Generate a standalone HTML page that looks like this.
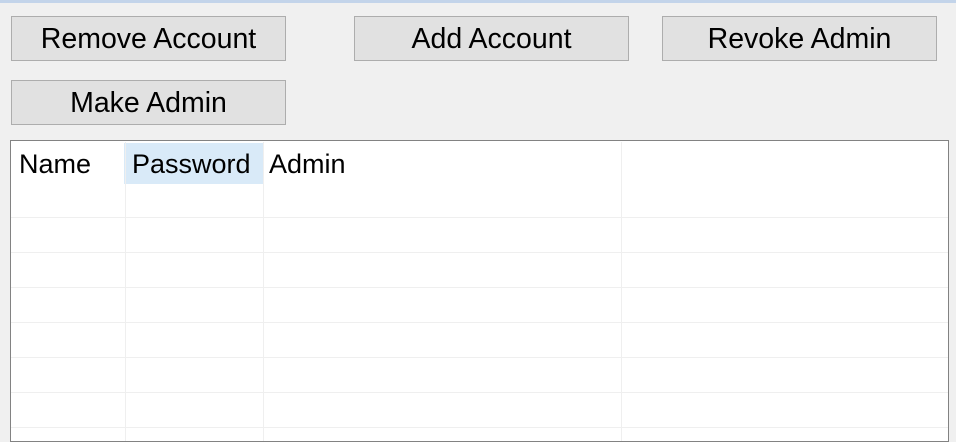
<!DOCTYPE html>
<html><head><style>
body{margin:0;width:956px;height:442px;background:#f0f0f0;position:relative;overflow:hidden;font-family:"Liberation Sans",Arial,sans-serif;}
.top{position:absolute;left:0;top:0;width:956px;height:3px;background:#c3d4ea}
.btn{position:absolute;box-sizing:border-box;width:275px;height:45px;background:#e1e1e1;border:1px solid #adadad;font-size:28.5px;color:#000;text-align:center;line-height:45px}
.tbl{position:absolute;left:10px;top:140px;width:939px;height:302px;box-sizing:border-box;border:1px solid #828282;background:#fff}
.h{position:absolute;top:3px;height:40px;line-height:40px;font-size:27px;color:#000}
.vl{position:absolute;width:1px;background:#efefef;top:1px;bottom:0}
.hl{position:absolute;left:0;right:0;height:1px;background:#efefef}
</style></head><body>
<div class="top"></div>
<div class="btn" style="left:11px;top:16px">Remove Account</div>
<div class="btn" style="left:354px;top:16px">Add Account</div>
<div class="btn" style="left:662px;top:16px">Revoke Admin</div>
<div class="btn" style="left:11px;top:80px">Make Admin</div>
<div class="tbl">
<div style="position:absolute;left:113px;top:2px;width:139px;height:41px;background:#d9eaf8"></div>
<div class="h" style="left:8px">Name</div>
<div class="h" style="left:121px">Password</div>
<div class="h" style="left:258px">Admin</div>
<div class="vl" style="left:114px"></div>
<div class="vl" style="left:252px"></div>
<div class="vl" style="left:610px"></div>
<div class="hl" style="top:76px"></div>
<div class="hl" style="top:111px"></div>
<div class="hl" style="top:146px"></div>
<div class="hl" style="top:181px"></div>
<div class="hl" style="top:216px"></div>
<div class="hl" style="top:251px"></div>
<div class="hl" style="top:286px"></div>
</div>
</body></html>
